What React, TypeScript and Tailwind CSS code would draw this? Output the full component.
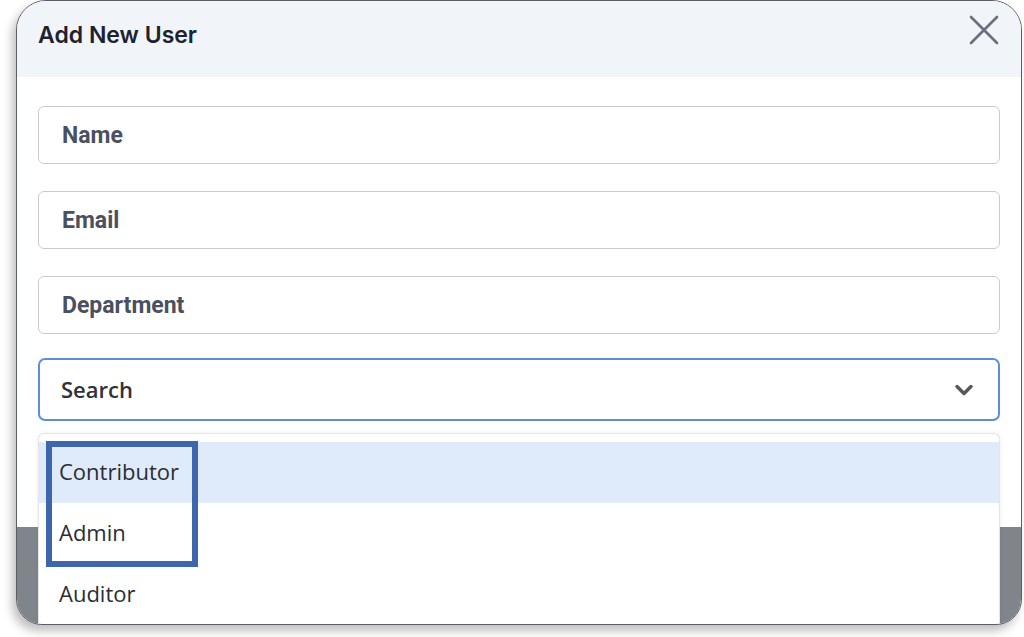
import { ChevronDown } from 'lucide-react';

const fields = ['Name', 'Email', 'Department'];
const roles = ['Contributor', 'Admin', 'Auditor'];

export default function App() {
  return (
    <div className="w-[1024px] h-[637px] bg-white overflow-hidden">
      <div className="relative ml-[16px] w-[1006px] h-[625px] rounded-[30px] rounded-b-[26px] border border-[#5b5e63] bg-white overflow-hidden shadow-[-4px_6px_10px_rgba(0,0,0,0.25)] flex flex-col">
        <div className="h-[76px] shrink-0 bg-[#f1f4f8] flex items-center justify-between pl-[21px] pr-[22px]">
          <h2 className="text-[23px] font-semibold text-[#1d2230] font-['Inter',sans-serif] -mt-[8px]">Add New User</h2>
          <svg width="30" height="30" viewBox="0 0 30 30" className="-mt-[18px]" fill="none" stroke="#6b6f7d" strokeWidth="2.6" strokeLinecap="round">
            <path d="M2 2 L28 28 M28 2 L2 28" />
          </svg>
        </div>

        <div className="flex flex-col gap-[27px] px-[21px] pt-[29px]">
          {fields.map((f) => (
            <div
              key={f}
              className="h-[58px] rounded-[6px] border border-[#c9cbcf] flex items-center px-[23px] pt-[3px] text-[23px] font-bold text-[#4a5060] font-['Roboto',sans-serif]"
            >
              {f}
            </div>
          ))}
        </div>

        <div className="mx-[21px] mt-[24px] h-[63px] rounded-[7px] border-2 border-[#5b8ee0] flex items-center justify-between pl-[21px] pr-[20px] text-[22px] font-semibold text-[#2f3236] font-['Open_Sans',sans-serif]">
          <span>Search</span>
          <ChevronDown className="w-[28px] h-[28px] text-[#55585c]" strokeWidth={3} />
        </div>

        <div className="flex-1" />
        <div className="h-[97px] shrink-0 bg-[#80858c]" />

        <div className="absolute left-[21px] right-[21px] top-[432px] bottom-0 bg-white rounded-t-[6px] border border-b-0 border-[#e3e5e8] shadow-[0_0_4px_rgba(0,0,0,0.08)] pt-[8px] font-['Open_Sans',sans-serif] text-[22px] text-[#2b2e33]">
          {roles.map((r, i) => (
            <div
              key={r}
              className={`h-[61px] flex items-center pl-[20px] pb-[3px] ${i === 0 ? 'bg-[#dfeafb]' : ''}`}
            >
              {r}
            </div>
          ))}
        </div>

        <div className="absolute left-[29px] top-[440px] w-[152px] h-[126px] border-[6px] border-[#3d66ad]" />
      </div>
    </div>
  );
}
